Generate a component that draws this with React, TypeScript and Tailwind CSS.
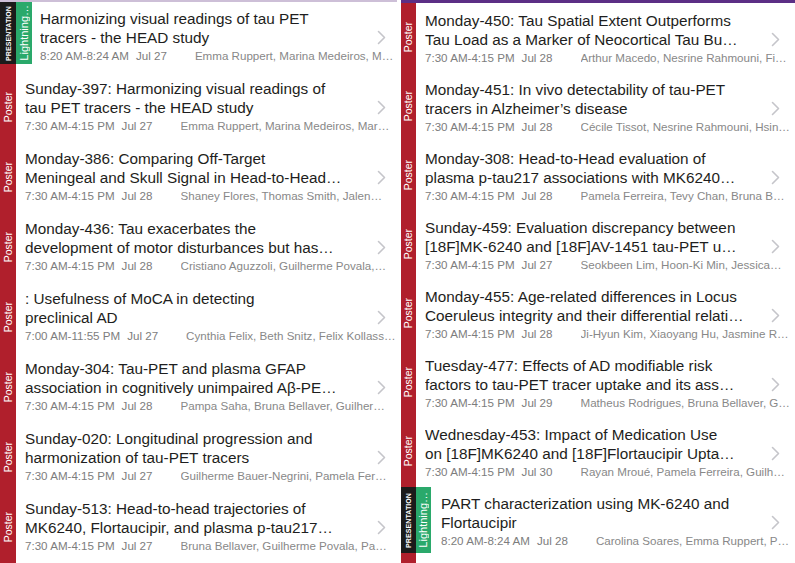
import React from "react";

type Item = {
  kind: "poster" | "pres" | "blank";
  l1: string;
  l2: string;
  time: string;
  date: string;
  authors: string;
};

const blank: Item = { kind: "blank", l1: "", l2: "", time: "", date: "", authors: "" };

const left: Item[] = [
  { kind: "pres", l1: "Harmonizing visual readings of tau PET", l2: "tracers - the HEAD study", time: "8:20 AM-8:24 AM", date: "Jul 27", authors: "Emma Ruppert, Marina Medeiros, M…" },
  { kind: "poster", l1: "Sunday-397: Harmonizing visual readings of", l2: "tau PET tracers - the HEAD study", time: "7:30 AM-4:15 PM", date: "Jul 27", authors: "Emma Ruppert, Marina Medeiros, Mar…" },
  { kind: "poster", l1: "Monday-386: Comparing Off-Target", l2: "Meningeal and Skull Signal in Head-to-Head…", time: "7:30 AM-4:15 PM", date: "Jul 28", authors: "Shaney Flores, Thomas Smith, Jalen…" },
  { kind: "poster", l1: "Monday-436: Tau exacerbates the", l2: "development of motor disturbances but has…", time: "7:30 AM-4:15 PM", date: "Jul 28", authors: "Cristiano Aguzzoli, Guilherme Povala,…" },
  { kind: "poster", l1: ": Usefulness of MoCA in detecting", l2: "preclinical AD", time: "7:00 AM-11:55 PM", date: "Jul 27", authors: "Cynthia Felix, Beth Snitz, Felix Kollass…" },
  { kind: "poster", l1: "Monday-304: Tau-PET and plasma GFAP", l2: "association in cognitively unimpaired Aβ-PE…", time: "7:30 AM-4:15 PM", date: "Jul 28", authors: "Pampa Saha, Bruna Bellaver, Guilher…" },
  { kind: "poster", l1: "Sunday-020: Longitudinal progression and", l2: "harmonization of tau-PET tracers", time: "7:30 AM-4:15 PM", date: "Jul 27", authors: "Guilherme Bauer-Negrini, Pamela Fer…" },
  { kind: "poster", l1: "Sunday-513: Head-to-head trajectories of", l2: "MK6240, Flortaucipir, and plasma p-tau217…", time: "7:30 AM-4:15 PM", date: "Jul 27", authors: "Bruna Bellaver, Guilherme Povala, Pa…" },
  blank,
];

const right: Item[] = [
  { kind: "poster", l1: "Monday-450: Tau Spatial Extent Outperforms", l2: "Tau Load as a Marker of Neocortical Tau Bu…", time: "7:30 AM-4:15 PM", date: "Jul 28", authors: "Arthur Macedo, Nesrine Rahmouni, Fi…" },
  { kind: "poster", l1: "Monday-451: In vivo detectability of tau-PET", l2: "tracers in Alzheimer’s disease", time: "7:30 AM-4:15 PM", date: "Jul 28", authors: "Cécile Tissot, Nesrine Rahmouni, Hsin…" },
  { kind: "poster", l1: "Monday-308: Head-to-Head evaluation of", l2: "plasma p-tau217 associations with MK6240…", time: "7:30 AM-4:15 PM", date: "Jul 28", authors: "Pamela Ferreira, Tevy Chan, Bruna B…" },
  { kind: "poster", l1: "Sunday-459: Evaluation discrepancy between", l2: "[18F]MK-6240 and [18F]AV-1451 tau-PET u…", time: "7:30 AM-4:15 PM", date: "Jul 27", authors: "Seokbeen Lim, Hoon-Ki Min, Jessica…" },
  { kind: "poster", l1: "Monday-455: Age-related differences in Locus", l2: "Coeruleus integrity and their differential relati…", time: "7:30 AM-4:15 PM", date: "Jul 28", authors: "Ji-Hyun Kim, Xiaoyang Hu, Jasmine R…" },
  { kind: "poster", l1: "Tuesday-477: Effects of AD modifiable risk", l2: "factors to tau-PET tracer uptake and its ass…", time: "7:30 AM-4:15 PM", date: "Jul 29", authors: "Matheus Rodrigues, Bruna Bellaver, G…" },
  { kind: "poster", l1: "Wednesday-453: Impact of Medication Use", l2: "on [18F]MK6240 and [18F]Flortaucipir Upta…", time: "7:30 AM-4:15 PM", date: "Jul 30", authors: "Rayan Mroué, Pamela Ferreira, Guilh…" },
  { kind: "pres", l1: "PART characterization using MK-6240 and", l2: "Flortaucipir", time: "8:20 AM-8:24 AM", date: "Jul 28", authors: "Carolina Soares, Emma Ruppert, P…" },
  blank,
];

function Chevron() {
  return (
    <svg width="9" height="15" viewBox="0 0 9 15" fill="none">
      <path d="M1.5 1.5 L7.5 7.5 L1.5 13.5" stroke="#c5c5ca" strokeWidth="1.6" strokeLinecap="round" strokeLinejoin="round" />
    </svg>
  );
}

type Cfg = {
  rowH: string;
  stripW: string;
  greenW: string;
  presH: string;
  presMt: string;
  posterPad: string;
  presPad: string;
  chevMr: string;
  pt: string;
};

function Row({ item, cfg }: { item: Item; cfg: Cfg }) {
  const pres = item.kind === "pres";
  if (item.kind === "blank") {
    return (
      <div className={`flex ${cfg.rowH} shrink-0`}>
        <div className={`${cfg.stripW} shrink-0 bg-[#b01f2c]`} />
      </div>
    );
  }
  return (
    <div className={`flex ${cfg.rowH} shrink-0`}>
      <div className={`${cfg.stripW} shrink-0 bg-[#b01f2c] flex flex-col`}>
        {pres ? (
          <div className={`${cfg.presH} ${cfg.presMt} bg-[#1b1b1b] flex items-center justify-center`}>
            <span className="[writing-mode:vertical-rl] rotate-180 text-white font-bold text-[7px] leading-none tracking-[0.1px]">
              PRESENTATION
            </span>
          </div>
        ) : (
          <div className="flex-1 flex items-center justify-center">
            <span className="[writing-mode:vertical-rl] rotate-180 text-white text-[10.5px] leading-none">Poster</span>
          </div>
        )}
      </div>
      {pres && (
        <div className={`${cfg.greenW} shrink-0 flex flex-col`}>
          <div className={`${cfg.presH} ${cfg.presMt} bg-[#2aa96b] flex items-center justify-center`}>
            <span className="[writing-mode:vertical-rl] rotate-180 text-white text-[11px] leading-none">Lightning…</span>
          </div>
        </div>
      )}
      <div className={`flex-1 min-w-0 flex flex-col ${cfg.pt} ${pres ? cfg.presPad : cfg.posterPad} pr-[1px]`}>
        <div className="flex">
          <div className="flex-1 min-w-0 text-[15.3px] leading-[19px] text-[#1e1e20] whitespace-nowrap overflow-hidden">
            <div className="overflow-hidden">{item.l1}</div>
            <div className="overflow-hidden">{item.l2}</div>
          </div>
          <div className={`shrink-0 pt-[21px] pl-[6px] ${cfg.chevMr}`}>
            <Chevron />
          </div>
        </div>
        <div className="mt-[2px] flex items-center h-[14px] text-[11.6px] leading-[14px] whitespace-nowrap">
          <span className="text-[#7d7d7d] shrink-0">{item.time}</span>
          <span className="text-[#7d7d7d] shrink-0 ml-[7px]">{item.date}</span>
          <span className="text-[#888888] ml-[28px] min-w-0 overflow-hidden">{item.authors}</span>
        </div>
      </div>
    </div>
  );
}

const leftCfg: Cfg = {
  rowH: "h-[70px]",
  stripW: "w-[16px]",
  greenW: "w-[16px]",
  presH: "h-[62px]",
  presMt: "mt-0",
  posterPad: "pl-[9px]",
  presPad: "pl-[8px]",
  chevMr: "mr-[10px]",
  pt: "pt-[7px]",
};

const rightCfg: Cfg = {
  rowH: "h-[69px]",
  stripW: "w-[15px]",
  greenW: "w-[15px]",
  presH: "h-[66px]",
  presMt: "mt-[1px]",
  posterPad: "pl-[9px]",
  presPad: "pl-[10px]",
  chevMr: "mr-[14px]",
  pt: "pt-[8px]",
};

export default function App() {
  return (
    <div
      className="w-[795px] h-[563px] overflow-hidden bg-white flex"
      style={{ fontFamily: '"Liberation Sans", Arial, Helvetica, sans-serif' }}
    >
      <div className="w-[397px] shrink-0 flex flex-col border-t-2 border-[#cdbfd7] overflow-hidden">
        {left.map((it, i) => (
          <Row key={i} item={it} cfg={leftCfg} />
        ))}
      </div>
      <div className="w-[4px] shrink-0" />
      <div className="w-[394px] shrink-0 flex flex-col border-t-[3px] border-[#5c2f85] overflow-hidden">
        {right.map((it, i) => (
          <Row key={i} item={it} cfg={rightCfg} />
        ))}
      </div>
    </div>
  );
}
